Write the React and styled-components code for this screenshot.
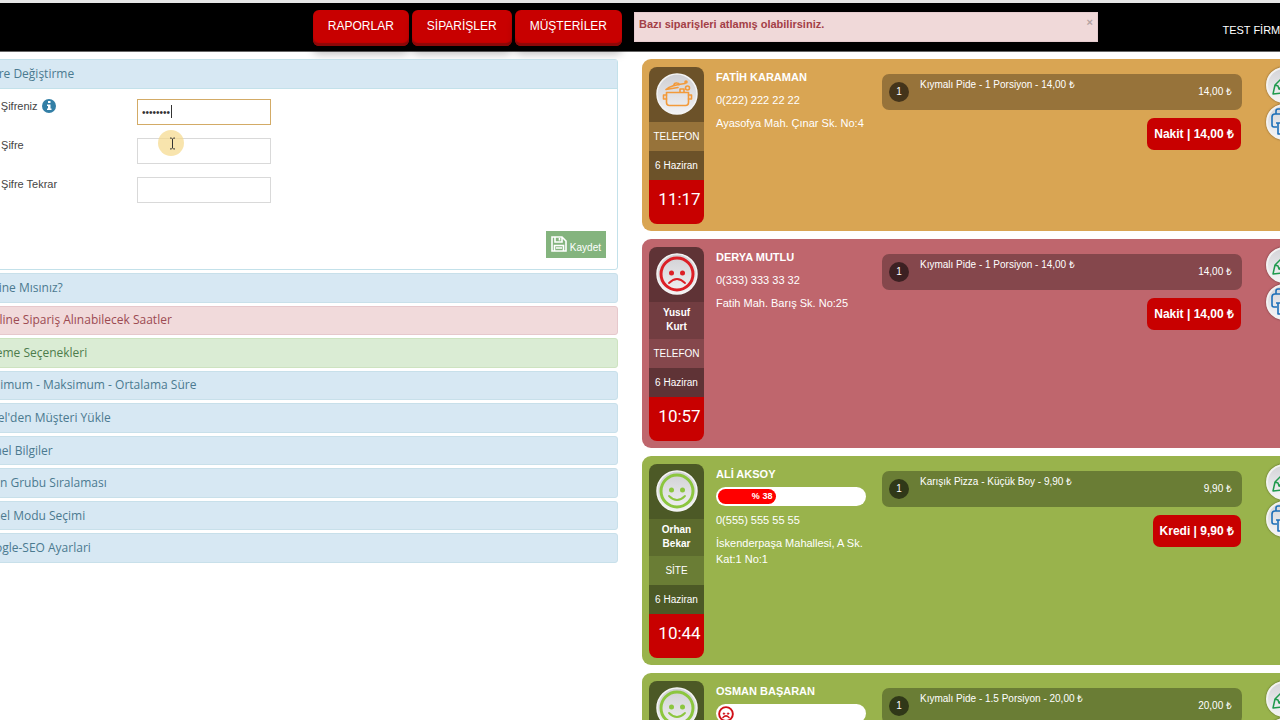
import { useState } from "react";
import styled, { createGlobalStyle } from "styled-components";

const GlobalStyle = createGlobalStyle`
    * {
        box-sizing: border-box;
    }

    body {
        margin: 0;
        background: #fff;
        color: #333;
        font-family: "Liberation Sans", Arial, sans-serif;
        font-size: 11px;
        line-height: 16px;
        overflow: hidden;
    }
`;

const S = {
    Page: styled.div`
        width: calc(100% + 100px);
        margin-left: -60px;
    `,
    Header: styled.header`
        display: flex;
        align-items: flex-start;
        height: 52px;
        padding-top: 7px;
        background: #000;
        border-top: 3px solid #e6e6e6;
        border-bottom: 1px solid #666;
    `,
    Nav: styled.nav`
        display: flex;
        flex: 0 0 50%;
        justify-content: flex-end;
        gap: 3px;
        padding-right: 8px;
    `,
    NavButton: styled.a`
        height: 36px;
        padding: 8px 15px;
        background: #c80000;
        border-radius: 6px;
        box-shadow: inset 0 -3px 1px #8c0808, 0 8px 8px rgba(0, 0, 0, 0.25);
        color: #fff;
        font-size: 12px;
        text-decoration: none;
    `,
    Alert: styled.div`
        display: flex;
        flex: 0 0 464px;
        justify-content: space-between;
        height: 30px;
        margin: 2px 0 0 4px;
        padding: 3px 4px;
        background: #f0d9d9;
        border: 1px solid #e6cccf;
        color: #a33f47;
        font-weight: bold;
    `,
    Close: styled.button`
        align-self: flex-start;
        padding: 0;
        background: none;
        border: none;
        color: #b5a3a3;
        font-size: 11px;
        font-weight: bold;
        line-height: 12px;
    `,
    Firm: styled.span`
        margin-left: auto;
        padding: 12px 22px 0 0;
        color: #fff;
        white-space: nowrap;
    `,
    Main: styled.main`
        display: grid;
        grid-template-columns: 1fr 1fr;
        gap: 24px;
        align-items: start;
        padding: 7px 12px;
    `,
    Settings: styled.div`
        display: flex;
        flex-direction: column;
        gap: 3px;
    `,
    OpenPanel: styled.section`
        border: 1px solid #c3e1ea;
        border-radius: 3px;
    `,
    PanelTitle: styled.h2`
        margin: 0;
        padding: 6px 32px;
        background: #d7e8f3;
        border-bottom: 1px solid #c3e1ea;
        color: #4b7a90;
        font-family: "Open Sans", sans-serif;
        font-size: 12px;
        font-weight: normal;
        line-height: 16px;
    `,
    PanelBody: styled.form`
        display: flex;
        flex-direction: column;
        gap: 13px;
        padding: 10px 11px 11px 24px;
    `,
    Field: styled.div`
        display: grid;
        grid-template-columns: 160px 134px;
        height: 26px;
    `,
    Label: styled.label`
        display: flex;
        gap: 4px;
        color: #444;
        line-height: 14px;
    `,
    InputWrap: styled.span`
        position: relative;
        display: block;
    `,
    Input: styled.input`
        width: 100%;
        height: 26px;
        padding: 0 4px;
        background: #fff;
        border: 1px solid ${(props) => (props.$active ? "#d3ab66" : "#d9d9d9")};
        outline: none;
        color: #333;
        font-family: "Liberation Sans", Arial, sans-serif;
        font-size: 10px;
        caret-color: transparent;
    `,
    Caret: styled.span`
        position: absolute;
        left: 34px;
        top: 6px;
        width: 1px;
        height: 13px;
        background: #333;
    `,
    Pointer: styled.svg`
        position: absolute;
        left: 20px;
        top: -9px;
    `,
    SaveButton: styled.button`
        display: flex;
        align-self: flex-end;
        align-items: center;
        gap: 3px;
        height: 27px;
        margin-top: 15px;
        padding: 0 5px;
        background: #84b47e;
        border: none;
        color: #fff;
        font-family: "Liberation Sans", Arial, sans-serif;
        font-size: 10px;

        svg {
            margin-bottom: 2px;
        }

        span {
            padding-top: 5px;
        }
    `,
    PanelList: styled.div`
        display: grid;
        grid-auto-rows: 1fr;
        gap: 3px;
        min-height: 290px;
    `,
    PanelLink: styled.a`
        display: flex;
        align-items: center;
        padding: 0 26px;
        background: ${(props) => tones[props.$tone].background};
        border: 1px solid ${(props) => tones[props.$tone].border};
        border-radius: 3px;
        color: ${(props) => tones[props.$tone].color};
        font-family: "Open Sans", sans-serif;
        font-size: 12px;
        text-decoration: none;
    `,
    Orders: styled.div`
        display: flex;
        flex-direction: column;
        gap: 8px;
    `,
    Order: styled.article`
        display: grid;
        grid-template-columns: 55px 150px 1fr 36px;
        align-items: start;
        padding: 8px 6px 7px 7px;
        background: ${(props) => props.$color};
        border-radius: 9px;
    `,
    Side: styled.div`
        border-radius: 8px;
        color: #fff;
        font-size: 10px;
        text-align: center;
        overflow: hidden;
    `,
    SideIcon: styled.div`
        height: 55px;
        padding-top: 6px;
        background: rgba(0, 0, 0, 0.5);
    `,
    Courier: styled.div`
        padding: 4px 8px 5px;
        background: rgba(0, 0, 0, 0.4);
        font-weight: bold;
        line-height: 14px;
    `,
    Channel: styled.div`
        background: rgba(0, 0, 0, 0.3);
        line-height: 29px;
    `,
    OrderDate: styled.div`
        background: rgba(0, 0, 0, 0.5);
        line-height: 29px;
    `,
    Time: styled.time`
        display: block;
        height: 44px;
        padding-left: 6px;
        background: #c80000;
        font-family: Roboto, sans-serif;
        font-size: 17px;
        line-height: 39px;
    `,
    Customer: styled.div`
        display: flex;
        flex-direction: column;
        gap: 7px;
        margin-left: 12px;
        padding-top: 2px;
        width: 150px;
        color: #fff;
    `,
    Score: styled.div`
        height: 19px;
        margin: -2px 0 -1px;
        padding: 2px;
        background: #fff;
        border-radius: 10px;
    `,
    ScoreFill: styled.div`
        height: 15px;
        padding-right: 4px;
        background: #f00;
        border-radius: 8px;
        font-size: 9px;
        font-weight: bold;
        line-height: 14px;
        text-align: right;
    `,
    Basket: styled.div`
        display: flex;
        flex-direction: column;
        align-items: flex-end;
        gap: 8px;
        margin: 7px 24px 0 28px;
    `,
    BasketRow: styled.div`
        display: grid;
        grid-template-columns: 20px 1fr auto;
        gap: 11px;
        align-items: center;
        width: 100%;
        height: 36px;
        padding: 0 10px 0 7px;
        background: rgba(0, 0, 0, 0.3);
        border-radius: 7px;
        color: #fff;
        font-size: 10px;
    `,
    Count: styled.span`
        height: 20px;
        background: rgba(0, 0, 0, 0.55);
        border-radius: 50%;
        line-height: 20px;
        text-align: center;
    `,
    Product: styled.span`
        align-self: start;
        padding-top: 3px;
    `,
    Total: styled.button`
        height: 32px;
        margin-right: 1px;
        padding: 0 7px 2px;
        background: #c80000;
        border: none;
        border-radius: 7px;
        color: #fff;
        font-family: "Liberation Sans", Arial, sans-serif;
        font-size: 12px;
        font-weight: bold;
    `,
    Actions: styled.div`
        display: flex;
        flex-direction: column;
        gap: 1px;
    `,
    ActionButton: styled.button`
        width: 36px;
        height: 36px;
        padding: 0;
        background: linear-gradient(#d4d4d8, #f4f4f6);
        border: 2px solid #f2f2f2;
        border-radius: 50%;
        box-shadow: 0 0 2px rgba(0, 0, 0, 0.5);
    `,
};

const tones = {
    info: { background: "#d7e8f3", border: "#c8e0ea", color: "#4b7a90" },
    danger: { background: "#f1dadb", border: "#e6c8cc", color: "#9c4a52" },
    success: { background: "#daecd4", border: "#cde3c0", color: "#4d7c4c" },
};

const panels = [
    { title: "Online Mısınız?", tone: "info" },
    { title: "On-line Sipariş Alınabilecek Saatler", tone: "danger" },
    { title: "Ödeme Seçenekleri", tone: "success" },
    { title: "Minimum - Maksimum - Ortalama Süre", tone: "info" },
    { title: "Excel'den Müşteri Yükle", tone: "info" },
    { title: "Genel Bilgiler", tone: "info" },
    { title: "Ürün Grubu Sıralaması", tone: "info" },
    { title: "Panel Modu Seçimi", tone: "info" },
    { title: "Google-SEO Ayarlari", tone: "info" },
];

const orders = [
    {
        color: "#d9a553",
        icon: "pot",
        channel: "TELEFON",
        time: "11:17",
        name: "FATİH KARAMAN",
        phone: "0(222) 222 22 22",
        address: "Ayasofya Mah. Çınar Sk. No:4",
        product: "Kıymalı Pide - 1 Porsiyon - 14,00 ₺",
        price: "14,00 ₺",
        payment: "Nakit",
    },
    {
        color: "#bf666d",
        icon: "sad",
        courier: "Yusuf Kurt",
        channel: "TELEFON",
        time: "10:57",
        name: "DERYA MUTLU",
        phone: "0(333) 333 33 32",
        address: "Fatih Mah. Barış Sk. No:25",
        product: "Kıymalı Pide - 1 Porsiyon - 14,00 ₺",
        price: "14,00 ₺",
        payment: "Nakit",
    },
    {
        color: "#99b34c",
        icon: "happy",
        courier: "Orhan Bekar",
        channel: "SİTE",
        time: "10:44",
        name: "ALİ AKSOY",
        score: 38,
        phone: "0(555) 555 55 55",
        address: "İskenderpaşa Mahallesi, A Sk. Kat:1 No:1",
        product: "Karışık Pizza - Küçük Boy - 9,90 ₺",
        price: "9,90 ₺",
        payment: "Kredi",
    },
    {
        color: "#99b34c",
        icon: "happy",
        courier: "Orhan Bekar",
        channel: "SİTE",
        time: "10:31",
        name: "OSMAN BAŞARAN",
        score: 0,
        phone: "0(444) 444 44 44",
        address: "Fatih Mah. Çınar Sk. No:8",
        product: "Kıymalı Pide - 1.5 Porsiyon - 20,00 ₺",
        price: "20,00 ₺",
        payment: "Nakit",
    },
];

function Pot() {
    return <g fill="none" stroke="#f39a3a" strokeWidth="1.6" strokeLinejoin="round" strokeLinecap="round">
        <path d="M10.500 19.500h22v10q0 3-3 3h-16q-3 0-3-3z" />
        <path d="M10.500 22H7.500v4h3M32.500 22h3v4h-3" />
        <path d="M10 16.500Q15 12 29 10.500M10 16.500l12-2M18 12.500q0-3 3-2.500 2 0 2 2" />
        <path d="M24 19v-3h4v3" />
        <circle cx="31.500" cy="15" r="2" />
        <circle cx="30" cy="9" r="1" />
    </g>
}

function Face({ mood, color, bold }) {
    return <g fill="none" stroke={color} strokeLinecap="round">
        <circle cx="21" cy="21" r={bold ? 18 : 16} strokeWidth={bold ? 5 : 3} />
        <circle cx="15.500" cy="20" r="2.500" fill={color} stroke={bold ? color : "none"} />
        <circle cx="26.500" cy="20" r="2.500" fill={color} stroke={bold ? color : "none"} />
        <path d={mood === "sad" ? "M13 30q8-8 16 0" : "M13 26q8 8 16 0"} strokeWidth={bold ? 4 : 1.8} />
    </g>
}

function StatusIcon({ icon }) {
    return <svg width="42" height="42" viewBox="0 0 42 42">
        <defs>
            <linearGradient id="silver" x1="0" y1="0" x2="0" y2="1">
                <stop offset="0" stopColor="#cfcfd3" />
                <stop offset="1" stopColor="#f2f2f4" />
            </linearGradient>
        </defs>
        <circle cx="21" cy="21" r="20" fill="url(#silver)" stroke="#f4f4f4" strokeWidth="1.500" />
        {icon === "pot" && <Pot />}
        {icon === "sad" && <Face mood="sad" color="#dc1f26" />}
        {icon === "happy" && <Face mood="happy" color="#8cc63f" />}
    </svg>
}

function OrderCard({ order }) {
    return <S.Order $color={order.color}>
        <S.Side>
            <S.SideIcon><StatusIcon icon={order.icon} /></S.SideIcon>
            {order.courier && <S.Courier>{order.courier}</S.Courier>}
            <S.Channel>{order.channel}</S.Channel>
            <S.OrderDate>6 Haziran</S.OrderDate>
            <S.Time>{order.time}</S.Time>
        </S.Side>
        <S.Customer>
            <strong>{order.name}</strong>
            {order.score > 0 && <S.Score>
                <S.ScoreFill style={{ width: `${order.score + 2}%` }}>% {order.score}</S.ScoreFill>
            </S.Score>}
            {order.score === 0 && <S.Score>
                <svg width="16" height="16" viewBox="0 0 42 42"><Face mood="sad" color="#d01018" bold /></svg>
            </S.Score>}
            <span>{order.phone}</span>
            <span>{order.address}</span>
        </S.Customer>
        <S.Basket>
            <S.BasketRow>
                <S.Count>1</S.Count>
                <S.Product>{order.product}</S.Product>
                <span>{order.price}</span>
            </S.BasketRow>
            <S.Total>{order.payment} | {order.price}</S.Total>
        </S.Basket>
        <S.Actions>
            <S.ActionButton aria-label="Düzenle">
                <svg width="32" height="32" viewBox="0 0 32 32" fill="none" stroke="#1f9a4d" strokeWidth="1.500" strokeLinejoin="round">
                    <path d="M5 25l2-9L18 5l8 8-11 11zM7 16l3 1 1 3 3 1 1 3M11 20l9-9" />
                </svg>
            </S.ActionButton>
            <S.ActionButton aria-label="Yazdır">
                <svg width="32" height="32" viewBox="0 0 32 32" fill="none" stroke="#1c6fb8" strokeWidth="1.600" strokeLinejoin="round">
                    <path d="M8 8V5q0-2 2-2h12q2 0 2 2v3M9 21H6q-2 0-2-2v-8q0-3 3-3h18q3 0 3 3v8q0 2-2 2h-3M8 17h16M10 17h12v11H10z" />
                </svg>
            </S.ActionButton>
        </S.Actions>
    </S.Order>
}

function PasswordPanel() {
    const [password, setPassword] = useState("12345678");

    return <S.OpenPanel>
        <S.PanelTitle>Şifre Değiştirme</S.PanelTitle>
        <S.PanelBody onSubmit={(e) => e.preventDefault()}>
            <S.Field>
                <S.Label htmlFor="current">
                    Eski Şifreniz
                    <svg width="14" height="14" viewBox="0 0 14 14">
                        <circle cx="7" cy="7" r="7" fill="#337fa6" />
                        <path d="M6 2h2.500v2H6zM5 5.500h3.500v4h1V11H5V9.500h1V7H5z" fill="#fff" />
                    </svg>
                </S.Label>
                <S.InputWrap>
                    <S.Input id="current" type="password" $active value={password} onChange={(e) => setPassword(e.target.value)} />
                    <S.Caret />
                </S.InputWrap>
            </S.Field>
            <S.Field>
                <S.Label htmlFor="next">Yeni Şifre</S.Label>
                <S.InputWrap>
                    <S.Input id="next" type="password" />
                    <S.Pointer width="28" height="28" viewBox="0 0 28 28">
                        <circle cx="14" cy="14" r="13" fill="#f5d98a" fillOpacity="0.700" />
                        <path d="M13 9q2 0 2.500 1 .5-1 2.500-1M15.500 10v9M13 20q2 0 2.500-1 .5 1 2.500 1" fill="none" stroke="#333" />
                    </S.Pointer>
                </S.InputWrap>
            </S.Field>
            <S.Field>
                <S.Label htmlFor="repeat">Yeni Şifre Tekrar</S.Label>
                <S.InputWrap><S.Input id="repeat" type="password" /></S.InputWrap>
            </S.Field>
            <S.SaveButton type="submit">
                <svg width="16" height="16" viewBox="0 0 16 16" fill="none" stroke="#fff" strokeWidth="1.600">
                    <path d="M1 1h10l4 4v10H1zM4 1v5h7V1M8.500 2v2.500M3.500 15V9.500h9V15M5 12h6" />
                </svg>
                <span>Kaydet</span>
            </S.SaveButton>
        </S.PanelBody>
    </S.OpenPanel>
}

function App() {
    const [alert, setAlert] = useState(true);

    return <S.Page>
        <GlobalStyle />
        <S.Header>
            <S.Nav>
                <S.NavButton href="#raporlar">RAPORLAR</S.NavButton>
                <S.NavButton href="#siparisler">SİPARİŞLER</S.NavButton>
                <S.NavButton href="#musteriler">MÜŞTERİLER</S.NavButton>
            </S.Nav>
            {alert && <S.Alert role="alert">
                Bazı siparişleri atlamış olabilirsiniz.
                <S.Close aria-label="Kapat" onClick={() => setAlert(false)}>×</S.Close>
            </S.Alert>}
            <S.Firm>TEST FİRMASI</S.Firm>
        </S.Header>
        <S.Main>
            <S.Settings>
                <PasswordPanel />
                <S.PanelList>
                    {panels.map((panel) => (
                        <S.PanelLink href="#" key={panel.title} $tone={panel.tone}>{panel.title}</S.PanelLink>
                    ))}
                </S.PanelList>
            </S.Settings>
            <S.Orders>
                {orders.map((order) => <OrderCard key={order.name} order={order} />)}
            </S.Orders>
        </S.Main>
    </S.Page>
}

export default App;
